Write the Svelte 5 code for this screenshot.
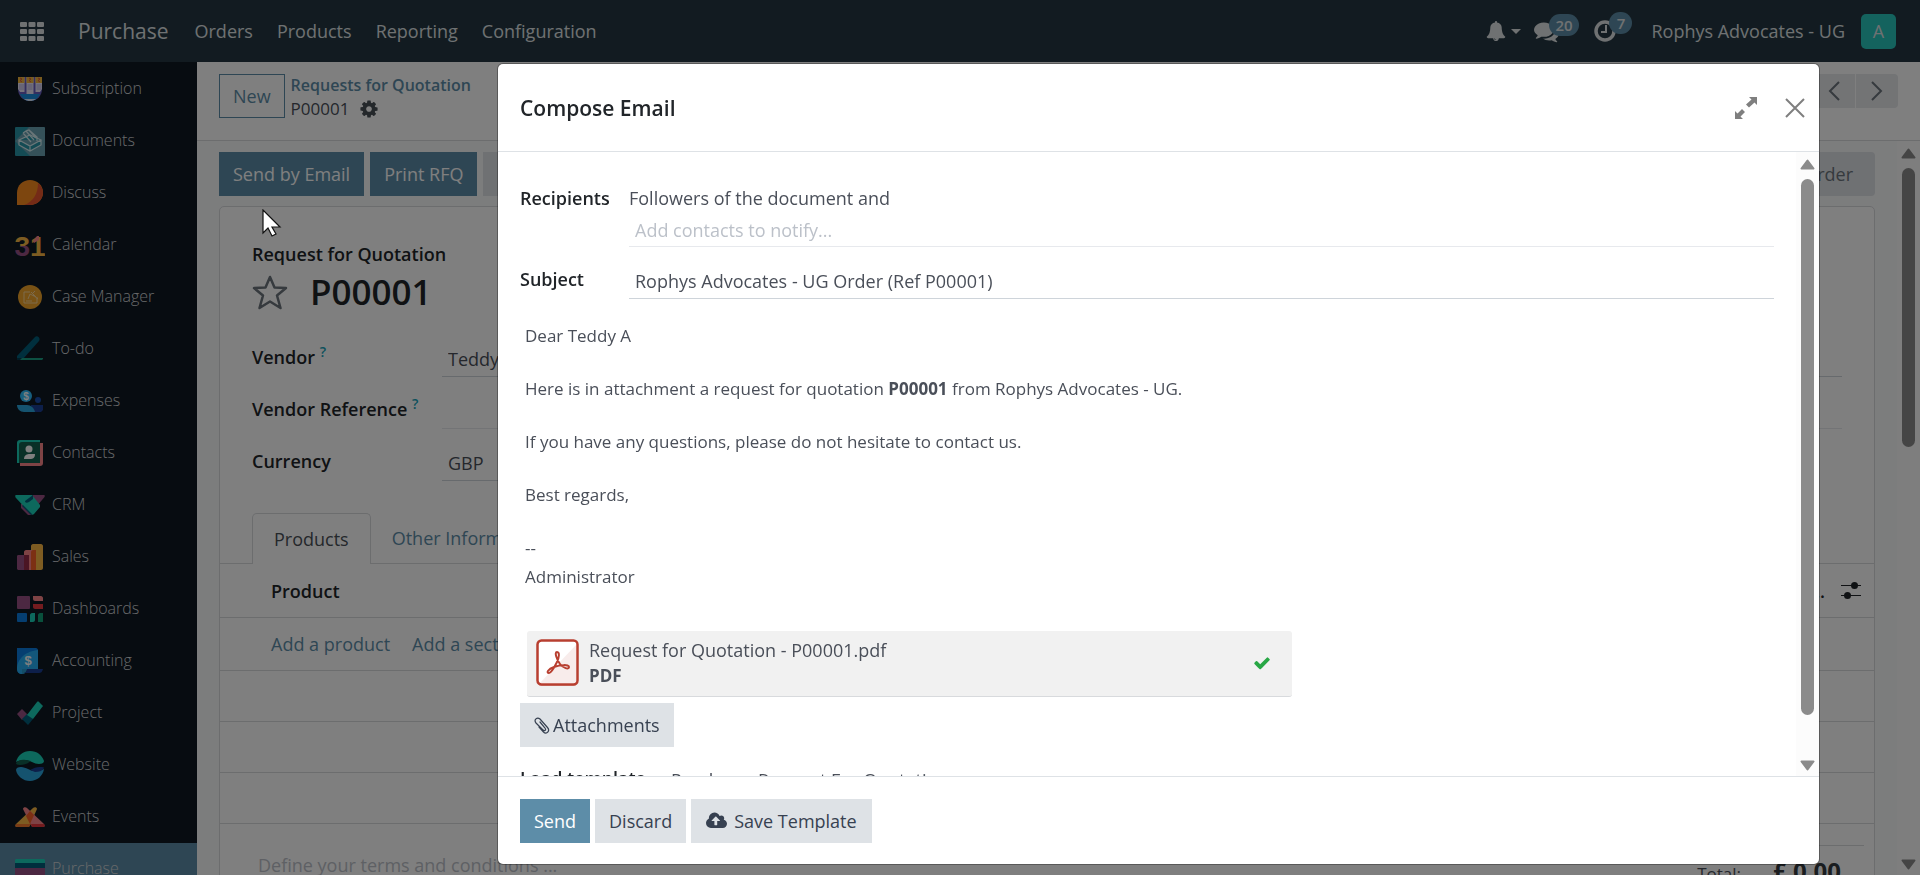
<script lang="ts">
	const menus = ['Orders', 'Products', 'Reporting', 'Configuration']

	const apps = [
		'Subscription',
		'Documents',
		'Discuss',
		'Calendar',
		'Case Manager',
		'To-do',
		'Expenses',
		'Contacts',
		'CRM',
		'Sales',
		'Dashboards',
		'Accounting',
		'Project',
		'Website',
		'Events',
		'Purchase'
	]

	let activeApp = $state('Purchase')
	let open = $state(true)
	let vendor = $state('Teddy A')
	let vendorRef = $state('')
	let currency = $state('GBP')
	let terms = $state('')
	let recipients = $state('')
	let subject = $state('Rophys Advocates - UG Order (Ref P00001)')
	let template = $state('Purchase: Request For Quotation')

	function close() {
		open = false
	}
</script>

{#snippet appIcon(name: string)}
	<svg class="app-icon" viewBox="0 0 30 30" aria-hidden="true">
		{#if name === 'Subscription'}
			<path d="M3 2h24v12c0 7-5 12-12 12S3 21 3 14z" fill="#6a5fc0" />
			<path d="M5 19h20c-2 4-5 7-10 7s-8-3-10-7z" fill="#1a8fe0" />
			<path d="M3 2h6.500v15H5L3 14zM11.500 2h7v17h-7zM20.500 2H27v12l-2 3h-4.500z" fill="#ece6f8" />
			<path d="M3 2h6.500v6H3zM11.500 2h7v6h-7zM20.500 2H27v6h-6.500z" fill="#f3b73c" />
			<path d="M5 3l2 1-2 1.500L7 7M14 3l2 1-2 1.500L16 7M23 3l2 1-2 1.500L25 7" stroke="#e0563b" fill="none" />
			<path d="M4 10h5M4 12h5M4 14h5M12.500 10h5M12.500 12h5M12.500 14h5M21.500 10h5M21.500 12h5M21.500 14h5" stroke="#a9a1dc" stroke-width=".8" />
			<path d="M9 24h12c-2 1.500-4 2-6 2s-4-.5-6-2z" fill="#d9e6fb" />
		{:else if name === 'Documents'}
			<rect width="30" height="29" rx="1" fill="#2896a8" />
			<path d="M15 29L30 14v15zM0 14L14 0h15l1 1v14L15 29z" fill="#7aa6b5" opacity=".8" />
			<path d="M4 13l11-5 11 5-11 6zM4 13v5l11 6 11-6v-5M15 19v5" fill="#2896a8" stroke="#d5edf1" stroke-width="1.200" />
			<path d="M8 6l8 9M8 6l3-2 8 9M11 4l3-1 7 8M14 3l8 7v4" fill="none" stroke="#d5edf1" stroke-width="1.200" />
		{:else if name === 'Discuss'}
			<path d="M2 26V14C2 6 8 1 15 1s13 5 13 12.500S22 26 15 26z" fill="#fb8d1e" />
			<path d="M23 4c3 2 5 6 5 9.500C28 21 22 26 15 26H9c9-3 14-11 14-22z" fill="#e8572e" />
		{:else if name === 'Calendar'}
			<linearGradient id="three" gradientUnits="userSpaceOnUse" x1="0" y1="5" x2="0" y2="24">
				<stop offset=".5" stop-color="#fbb945" />
				<stop offset=".55" stop-color="#985184" />
			</linearGradient>
			<text x="15" y="25" font-size="28" font-weight="700" text-anchor="middle" fill="#fbb945"><tspan fill="url(#three)">3</tspan>1</text>
			<path d="M18 10l4-5h2v4l-5 3z" fill="#fc868b" />
		{:else if name === 'Case Manager'}
			<circle cx="15" cy="14" r="12" fill="#f0a52b" />
			<path d="M9 9h6M9 9v11h13v-6M11 18h6M13 16l2-5 4 2M16 9l5 5M20 8l-3 3M18 12l5 4" fill="none" stroke="#f9d698" />
		{:else if name === 'To-do'}
			<path d="M2 24v-3L20 2c2-2 6 1 4 4L8 24z" fill="#005e7a" />
			<path d="M2 23h7l-2 2H2z" fill="#00384c" />
			<path d="M7 23h21v1l-1 1H5z" fill="#1ba085" />
		{:else if name === 'Expenses'}
			<circle cx="11" cy="9" r="6" fill="#2ebcfa" />
			<text x="11" y="13" font-size="10" font-weight="700" text-anchor="middle" fill="#fff">$</text>
			<circle cx="23" cy="13" r="3" fill="#1a4dab" />
			<path d="M16 18h12v5l-2 2H17z" fill="#1a3f95" />
			<path d="M2 18h10c4 0 7 3 8 7H9c-4 0-7-3-7-7z" fill="#2ba6de" />
		{:else if name === 'Contacts'}
			<path d="M8 4h20v20c0 2-1 3-3 3H5v-5z" fill="#fc868b" />
			<path d="M2 24V4c0-2 1-3 3-3h20v23z" fill="#1ad3bb" />
			<path d="M4 24V6c0-2 1-3 3-3h18v21z" fill="#12614e" />
			<circle cx="14" cy="10" r="3.500" fill="#fff" />
			<path d="M9 20c0-4 3-5 6-5h5c0 4-2 5-5 5z" fill="#fff" />
		{:else if name === 'CRM'}
			<path d="M17 4h12c1 0 1 1 .5 2L22 15z" fill="#985184" />
			<path d="M6 13v4l7 7h3l2-3-8-8z" fill="#985184" />
			<path d="M1 4h16l8 10v2l-6 7c-1 1-2 1-3 0L1 7c-1-1-1-3 0-3z" fill="#1ad3bb" />
			<path d="M18 4l-8 6c0 2 2 2 4 1l4-3zM8 14l9 9-1 1-9-9z" fill="#005e7a" />
		{:else if name === 'Sales'}
			<path d="M16 27V3c0-1 1-2 2-2h8c1 0 2 1 2 2v22c0 1-1 2-2 2z" fill="#fbb945" />
			<path d="M9 27V9c0-1 1-2 2-2h10v20z" fill="#fc868b" />
			<path d="M16 27V9c0-1 1-2 2-2h3v20z" fill="#f86126" />
			<path d="M2 26V13c0-1 1-1 2-1h10v15H3z" fill="#985184" />
			<path d="M9 12h5v15H9z" fill="#962b48" />
		{:else if name === 'Dashboards'}
			<rect x="2" y="1" width="13" height="13" rx="1" fill="#985184" />
			<path d="M18 1h8c1 0 2 1 2 2v3h-8c-1 0-2-1-2-2z" fill="#fc868b" />
			<path d="M18 9h10v5h-8c-1 0-2-1-2-2z" fill="#e8383f" />
			<rect x="2" y="18" width="10" height="9" rx="1" fill="#0a7de0" />
			<path d="M15 20c0-1 1-2 2-2h3v7c0 1-1 2-2 2h-3z" fill="#1ad3bb" />
			<path d="M23 20c0-1 1-2 2-2h3v9h-5z" fill="#12a078" />
		{:else if name === 'Accounting'}
			<path d="M2 1h19c1 0 2 1 2 2v19H7v5c-3 0-5-2-5-5z" fill="#0a7de0" />
			<path d="M23 3v19H12c0 3-2 5-5 5s-5-2-5-5C2 11 12 4 23 3z" fill="#2ebcfa" opacity=".8" />
			<path d="M12 22h16c-1 3-2 4-4 4H9c2-1 3-2 3-4z" fill="#1a3f95" />
			<text x="13" y="18" font-size="13" font-weight="700" text-anchor="middle" fill="#fff">$</text>
		{:else if name === 'Project'}
			<path d="M2 15l5-5 6 6-6 5z" fill="#985184" />
			<path d="M7 20l5-5 6 5-5 6z" fill="#005e7a" />
			<path d="M12 16L22 3c1-1 1-1 2 0l4 4L18 20z" fill="#1ad3bb" />
		{:else if name === 'Website'}
			<path d="M1 11C3 4 8 0 15 0s12 4 14 10c0 2-2 3-5 3-5 0-9-4-14-4-4 0-7 1-9 2z" fill="#1ad3bb" />
			<path d="M1 12c2-3 6-4 10-3l5 1c-4 3-7 4-11 4-3 0-4-1-4-2z" fill="#12614e" />
			<path d="M29 18c-1 7-7 12-14 12S2 25 1 19c0-2 2-3 5-3 5 0 9 4 14 4 4 0 7-1 9-2z" fill="#2ba6de" />
			<path d="M29 17c-2 3-5 4-9 4l-5-2c4-2 6-3 10-3 3 0 4 0 4 1z" fill="#1a3f95" />
		{:else if name === 'Events'}
			<path d="M18 5c1-1 4-1 4 1L14 24H2c-2 0-2-1-1-3z" fill="#fbb945" />
			<path d="M8 6c0-2 3-2 4-1l17 16c1 2 1 3-1 3H17z" fill="#fc868b" />
			<path d="M15 8l4 4-4 9-4-8z" fill="#f86126" />
			<path d="M1 21h15l-2 3H2c-2 0-2-2-1-3z" fill="#f57a2c" />
			<path d="M16 21h13c1 1 1 3-1 3H17z" fill="#e8383f" />
		{:else}
			<path d="M0 5l1-1h28l1 1v4H0z" fill="#1ad3bb" />
			<path d="M0 8h30v5H0z" fill="#005e7a" />
			<path d="M0 13h30v13H0z" fill="#985184" />
		{/if}
	</svg>
{/snippet}

{#snippet scrollbar(grow: number, rest: number)}
	<div class="scrollbar" aria-hidden="true">
		<svg width="15" height="11" viewBox="0 0 15 11"><path d="M7.500 1.500L13.500 9.500H1.500z" /></svg>
		<div class="thumb" style="flex-grow: {grow}"></div>
		<div style="flex-grow: {rest}"></div>
		<svg width="15" height="11" viewBox="0 0 15 11"><path d="M7.500 9.500L13.500 1.500H1.500z" /></svg>
	</div>
{/snippet}

<div class="shell">
	<header class="navbar">
		<button class="apps-toggle" aria-label="Apps">
			<svg width="24" height="19" viewBox="0 0 24 19" fill="currentColor">
				{#each [0, 7, 14] as y}
					{#each [0, 8.500, 17] as x}
						<rect {x} {y} width="7" height="5" rx="1" />
					{/each}
				{/each}
			</svg>
		</button>
		<a class="brand" href="#purchase">Purchase</a>
		<nav class="menus">
			{#each menus as menu}
				<a href="#{menu}">{menu}</a>
			{/each}
		</nav>
		<div class="systray">
			<button class="tray bell" aria-label="Notifications">
				<svg width="20" height="20" viewBox="0 0 1792 1792" fill="currentColor"><path d="M912 1696q0-16-16-16-59 0-101.500-42.500t-42.500-101.500q0-16-16-16t-16 16q0 73 51.500 124.500t124.500 51.500q16 0 16-16zm816-288q0 52-38 90t-90 38h-448q0 106-75 181t-181 75-181-75-75-181h-448q-52 0-90-38t-38-90q50-42 91-88t85-119.500 74.500-158.500 50-206 19.500-260q0-152 117-282.500t307-158.500q-8-19-8-39 0-40 28-68t68-28 68 28 28 68q0 20-8 39 190 28 307 158.500t117 282.500q0 139 19.500 260t50 206 74.500 158.500 85 119.500 91 88z" /></svg>
				<svg width="10" height="5" viewBox="0 0 10 5" fill="currentColor"><path d="M0 0h10L5 5z" /></svg>
			</button>
			<button class="tray" aria-label="Messages">
				<svg width="25" height="25" viewBox="0 0 1792 1792" fill="currentColor"><path d="M1408 768q0 139-94 257t-256.500 186.500-353.500 68.500q-86 0-176-16-124 88-278 128-36 9-86 16h-3q-11 0-20.500-8t-11.500-21q-1-3-1-6.500t.5-6.500 2-6l2.500-5t3.500-5.500 4-5 4.500-5 4-4.500q5-6 23-25t26-29.500 22.500-29 25-38.500 20.500-44q-124-72-195-177t-71-224q0-139 94-257t256.500-186.500 353.500-68.500 353.500 68.500 256.500 186.500 94 257zm384 256q0 120-71 224.500t-195 176.500q10 24 20.500 44t25 38.500 22.500 29 26 29.500 23 25q1 1 4 4.500t4.500 5 4 5 3.500 5.500l2.500 5t2 6 .5 6.500-1 6.500q-3 14-13 22t-22 7q-50-7-86-16-154-40-278-128-90 16-176 16-271 0-472-132 58 4 88 4 161 0 309-45t264-129q125-92 192-212t67-254q0-77-23-152 129 71 204 178t75 230z" /></svg>
				<span class="badge">20</span>
			</button>
			<button class="tray" aria-label="Activities">
				<svg width="22" height="22" viewBox="0 0 22 22" fill="none" stroke="currentColor"><circle cx="11" cy="11" r="9" stroke-width="3.500" /><path d="M12 5v7H7" stroke-width="2" /></svg>
				<span class="badge">7</span>
			</button>
			<a class="company" href="#company">Rophys Advocates - UG</a>
			<button class="avatar" aria-label="User menu">A</button>
		</div>
	</header>

	<div class="page">
		<nav class="sidebar">
			{#each apps as app}
				<a class="app" class:active={activeApp === app} href="#{app}" onclick={() => (activeApp = app)}>
					{@render appIcon(app)}
					<span>{app}</span>
				</a>
			{/each}
		</nav>

		<main class="main">
			<div class="control-panel">
				<button class="btn outline">New</button>
				<div class="breadcrumb">
					<a href="#rfq">Requests for Quotation</a>
					<span class="current">
						P00001
						<button class="plain" aria-label="Actions">
							<svg width="20" height="20" viewBox="0 0 1792 1792" fill="currentColor"><path d="M1152 896q0-106-75-181t-181-75-181 75-75 181 75 181 181 75 181-75 75-181zm512-109v222q0 12-8 23t-20 13l-185 28q-19 54-39 91 35 50 107 138 10 12 10 25t-9 23q-27 37-99 108t-94 71q-12 0-26-9l-138-108q-44 23-91 38-16 136-29 186-7 28-36 28h-222q-14 0-24.500-8.500t-11.500-21.500l-28-184q-49-16-90-37l-141 107q-10 9-25 9-14 0-25-11-126-114-165-168-7-10-7-23 0-12 8-23 15-21 51-66.500t54-70.500q-27-50-41-99l-183-27q-13-2-21-12.500t-8-23.500v-222q0-12 8-23t19-13l186-28q14-46 39-92-40-57-107-138-10-12-10-24 0-10 9-23 26-36 98.500-107.500t94.500-71.500q13 0 26 10l138 107q44-23 91-38 16-136 29-186 7-28 36-28h222q14 0 24.500 8.500t11.500 21.500l28 184q49 16 90 37l142-107q9-9 24-9 13 0 25 10 129 119 165 170 7 8 7 22 0 12-8 23-15 21-51 66.500t-54 70.500q26 50 41 98l183 28q13 2 21 12.500t8 23.500z" /></svg>
						</button>
					</span>
				</div>
				<div class="pager">
					<button aria-label="Previous">
						<svg width="12" height="20" viewBox="0 0 12 20"><path d="M11 1L2 10l9 9" /></svg>
					</button>
					<button aria-label="Next">
						<svg width="12" height="20" viewBox="0 0 12 20"><path d="M1 1l9 9-9 9" /></svg>
					</button>
				</div>
			</div>

			<div class="scroll-row">
				<div class="content">
					<div class="statusbar">
						<button class="btn primary">Send by Email</button>
						<button class="btn primary">Print RFQ</button>
						<button class="btn secondary confirm">Confirm Order</button>
						<button class="btn secondary status">Purchase Order</button>
					</div>

					<section class="sheet">
						<div class="title-block">
							<span class="label">Request for Quotation</span>
							<div class="title-row">
								<button class="plain star" aria-label="Priority">
									<svg width="36" height="36" viewBox="0 0 36 36" fill="none" stroke="currentColor" stroke-width="2.500" stroke-linejoin="round"><path d="M18 3l4.500 10.500L34 14l-9 7.500L28.500 34 18 27.500 7.500 34 11 21.500 2 14l11.500-.5z" /></svg>
								</button>
								<h1>P00001</h1>
							</div>
						</div>

						<div class="groups">
							<div class="group">
								<label for="vendor">Vendor <sup>?</sup></label>
								<input id="vendor" bind:value={vendor} />
								<label for="vendor-ref">Vendor Reference <sup>?</sup></label>
								<input id="vendor-ref" class="faint" bind:value={vendorRef} />
								<label for="currency">Currency</label>
								<input id="currency" bind:value={currency} />
							</div>
							<div class="group">
								<label for="deadline">Order Deadline</label>
								<input id="deadline" />
								<label for="arrival">Expected Arrival</label>
								<input id="arrival" class="faint" />
							</div>
						</div>

						<div class="tabs">
							<button class="tab active">Products</button>
							<button class="tab">Other Information</button>
						</div>

						<table class="lines">
							<thead>
								<tr>
									<th>Product</th>
									<th>
										<div class="optional">
											<span>Am...</span>
											<svg width="20" height="18" viewBox="0 0 20 18" fill="currentColor"><path d="M0 3h20v1H0zM0 13h20v1H0z" /><circle cx="13.500" cy="3.500" r="3.500" /><circle cx="6.500" cy="13.500" r="3.500" /></svg>
										</div>
									</th>
								</tr>
							</thead>
							<tbody>
								<tr>
									<td colspan="2">
										<div class="adders">
											<a href="#add-product">Add a product</a>
											<a href="#add-section">Add a section</a>
										</div>
									</td>
								</tr>
								{#each [1, 2, 3] as n (n)}
									<tr><td colspan="2"></td></tr>
								{/each}
							</tbody>
						</table>

						<div class="bottom">
							<textarea aria-label="Terms" rows="2" placeholder="Define your terms and conditions ..." bind:value={terms}></textarea>
							<div class="total"><span>Total:</span><strong>£ 0.00</strong></div>
						</div>
					</section>
				</div>
				{@render scrollbar(279, 394)}
			</div>
		</main>
	</div>
</div>

{#if open}
	<div class="backdrop">
		<div class="modal" role="dialog" aria-label="Compose Email">
			<header class="modal-header">
				<h2>Compose Email</h2>
				<button class="plain" aria-label="Expand">
					<svg width="24" height="24" viewBox="0 0 24 24" fill="currentColor"><path d="M15 1h8v8l-2.500-2.500-5.500 5-3-3 5.500-5zM9 23H1v-8l2.500 2.500L8 13l3 3-4.500 4.500z" /></svg>
				</button>
				<button class="plain" aria-label="Close" onclick={close}>
					<svg width="20" height="20" viewBox="0 0 20 20" fill="none" stroke="currentColor" stroke-width="2"><path d="M1 1l18 18M19 1L1 19" /></svg>
				</button>
			</header>

			<div class="modal-scroll">
				<div class="modal-body">
					<div class="row recipients">
						<label for="recipients">Recipients</label>
						<div class="cell">
							<span>Followers of the document and</span>
							<input id="recipients" class="faint tight" placeholder="Add contacts to notify..." bind:value={recipients} />
						</div>
					</div>
					<div class="row">
						<label for="subject">Subject</label>
						<input id="subject" bind:value={subject} />
					</div>

					<div class="editor">
						<p>Dear Teddy A</p>
						<p>Here is in attachment a request for quotation <b>P00001</b> from Rophys Advocates - UG.</p>
						<p>If you have any questions, please do not hesitate to contact us.</p>
						<p>Best regards,</p>
						<div class="signature">
							<span>--</span>
							<span>Administrator</span>
						</div>
					</div>

					<div class="attachment">
						<svg width="43" height="48" viewBox="0 0 43 48">
							<rect x="1" y="2" width="41" height="45" rx="5" fill="#e3b9b4" />
							<rect x="1.500" y="1.500" width="40" height="44" rx="4" fill="#fff" />
							<path d="M40 6v38H4z" fill="#f8eceb" />
							<rect x="1.500" y="1.500" width="40" height="44" rx="4" fill="none" stroke="#b83f30" stroke-width="2.500" />
							<path d="M21 13c3 0 2 6 0 10s-6 11-8 11c-3 0-1-4 5-6s15-3 15 0c0 3-6 1-9-3s-6-12-3-12z" fill="none" stroke="#b83f30" stroke-width="2" />
						</svg>
						<div class="file">
							<a href="#pdf">Request for Quotation - P00001.pdf</a>
							<b>PDF</b>
						</div>
						<svg class="check" width="18" height="18" viewBox="0 0 1792 1792" fill="currentColor"><path d="M1671 566q0 40-28 68l-724 724-136 136q-28 28-68 28t-68-28l-136-136-362-362q-28-28-28-68t28-68l136-136q28-28 68-28t68 28l294 295 656-657q28-28 68-28t68 28l136 136q28 28 28 68z" /></svg>
					</div>

					<button class="btn secondary attach">
						<svg width="16" height="17" viewBox="0 0 16 17" fill="none" stroke="currentColor" stroke-width="1.200" stroke-linecap="round"><path d="M6 5l5 6c1.500 2-.5 3.500-2 2L2 6C-.5 3 3-.5 6 2l7.500 8.500c3 3.500-1 7.500-4 4.500L5 10" /></svg>
						Attachments
					</button>

					<div class="row template">
						<label for="template">Load template</label>
						<input id="template" bind:value={template} />
					</div>
				</div>
				{@render scrollbar(536, 27)}
			</div>

			<footer class="modal-footer">
				<button class="btn primary">Send</button>
				<button class="btn secondary" onclick={close}>Discard</button>
				<button class="btn secondary save">
					<svg width="21" height="20" viewBox="-64 0 1920 1792" fill="currentColor"><path d="M1216 864q0-14-9-23l-352-352q-9-9-23-9t-23 9l-351 351q-10 12-10 24 0 14 9 23t23 9h224v352q0 13 9.500 22.500t22.500 9.500h192q13 0 22.500-9.500t9.500-22.500v-352h224q13 0 22.500-9.500t9.500-22.500zm640 288q0 159-112.500 271.500t-271.500 112.500h-1088q-185 0-316.500-131.500t-131.500-316.500q0-130 70-240t188-165q-2-30-2-43 0-212 150-362t362-150q156 0 285.500 87t188.500 231q71-62 166-62 106 0 181 75t75 181q0 76-41 138 130 31 213.500 135.500t83.500 238.500z" /></svg>
					Save Template
				</button>
			</footer>
		</div>
	</div>
{/if}

<svg class="cursor" width="20" height="28" viewBox="0 0 20 28" aria-hidden="true"><path d="M1 1v23l5-5 4 8 4-2-4-7h8z" fill="#fff" stroke="#111" stroke-width="1.200" /></svg>

<style>
	:global(body) {
		overflow: hidden;
		font-family: 'Open Sans', 'Noto Sans', sans-serif;
		font-size: 18px;
		line-height: 26px;
		color: #4a4f59;
	}

	.shell {
		height: 100vh;
		display: flex;
		flex-direction: column;
	}

	button,
	input,
	textarea {
		font: inherit;
		color: inherit;
		margin: 0;
		border: 0;
		border-radius: 0;
		box-sizing: border-box;
		background: none;
	}

	a {
		color: inherit;
		text-decoration: none;
	}

	svg {
		display: block;
		flex: none;
	}

	.navbar {
		height: 62px;
		flex: none;
		display: flex;
		align-items: center;
		padding: 0 24px 0 20px;
		box-sizing: border-box;
		background: #243742;
		color: #dfe2e4;
	}

	.apps-toggle {
		padding: 0;
		margin-right: 34px;
	}

	.brand {
		font-size: 21px;
		margin-right: 26px;
	}

	.menus {
		display: flex;
		gap: 24px;
	}

	.systray {
		margin-left: auto;
		display: flex;
		align-items: center;
	}

	.tray {
		position: relative;
		padding: 0;
		margin-right: 35px;
	}

	.bell {
		display: flex;
		align-items: center;
		gap: 5px;
		margin-right: 13px;
	}

	.badge {
		position: absolute;
		left: 15px;
		bottom: 8px;
		min-width: 11px;
		padding: 0 6px;
		border-radius: 11px;
		background: #5d8da8;
		font-size: 15px;
		font-weight: 600;
		line-height: 22px;
	}

	.avatar {
		width: 35px;
		height: 35px;
		margin-left: 16px;
		padding: 0;
		border-radius: 5px;
		background: #28c6bd;
	}

	.page {
		flex: 1;
		min-height: 0;
		display: flex;
	}

	.sidebar {
		width: 197px;
		flex: none;
		overflow: hidden;
		padding-top: 1px;
		box-sizing: border-box;
		background: #0e1822;
		color: #cfd2d5;
		font-size: 16px;
		font-weight: 300;
	}

	.app {
		display: flex;
		gap: 7px;
		height: 52px;
		padding: 12px 15px;
		box-sizing: border-box;
	}

	.app.active {
		background: #5d8da8;
	}

	.app-icon {
		width: 30px;
		height: 30px;
		font-family: 'Liberation Sans', sans-serif;
	}

	.main {
		flex: 1;
		min-width: 0;
		display: flex;
		flex-direction: column;
		background: #fff;
	}

	.control-panel {
		display: flex;
		align-items: flex-start;
		gap: 6px;
		height: 79px;
		flex: none;
		padding: 12px 22px;
		box-sizing: border-box;
		border-bottom: 1px solid #d8dadd;
	}

	.btn {
		height: 44px;
		padding: 0 14px;
		white-space: nowrap;
	}

	.primary {
		background: #5d8da8;
		color: #fff;
	}

	.secondary {
		background: #dee2e6;
		color: #374151;
	}

	.outline {
		padding: 0 13px;
		border: 1px solid #5d8da8;
		color: #5d8da8;
	}

	.breadcrumb {
		display: flex;
		flex-direction: column;
		font-size: 17px;
		line-height: 23px;
	}

	.breadcrumb a {
		color: #5d8da8;
		font-size: 16px;
		font-weight: 600;
	}

	.current {
		display: flex;
		align-items: center;
		gap: 10px;
	}

	.plain {
		padding: 0;
		color: #495057;
	}

	.pager {
		display: flex;
		gap: 1px;
		margin-left: auto;
	}

	.pager button {
		width: 42px;
		height: 34px;
		display: grid;
		place-items: center;
		padding: 0;
		background: #e6e8eb;
	}

	.pager button:last-child {
		border-radius: 0 4px 4px 0;
	}

	.pager path {
		fill: none;
		stroke: #6c757d;
		stroke-width: 2;
	}

	.scroll-row {
		flex: 1;
		min-height: 0;
		display: flex;
		background: #f9fafb;
	}

	.content {
		flex: 1;
		min-width: 0;
		overflow: hidden;
		padding: 11px 22px;
	}

	.statusbar {
		display: flex;
		gap: 6px;
		margin-bottom: 10px;
	}

	.confirm {
		padding: 0 20px;
	}

	.status {
		margin-left: auto;
		padding: 0 22px;
		border-radius: 4px;
		color: #6c757d;
	}

	.scrollbar {
		width: 23px;
		flex: none;
		display: flex;
		flex-direction: column;
		align-items: center;
		gap: 9px;
		padding: 7px 0 5px;
		box-sizing: border-box;
		background: #fcfcfc;
		color: #8b8b8b;
	}

	.scrollbar path {
		fill: currentColor;
		stroke: currentColor;
		stroke-width: 2;
		stroke-linejoin: round;
	}

	.thumb {
		width: 13px;
		border-radius: 7px;
		background: currentColor;
	}

	.sheet {
		border: 1px solid #d8dadd;
		border-radius: 5px;
		background: #fff;
	}

	.title-block {
		padding: 34px 32px 0;
	}

	.label,
	label,
	th {
		color: #212529;
		font-weight: 600;
	}

	.title-row {
		display: flex;
		align-items: center;
		gap: 22px;
		height: 50px;
	}

	.star {
		color: #6c757d;
	}

	h1 {
		margin: 0;
		font-size: 35px;
		font-weight: 600;
		color: #212529;
	}

	.groups {
		display: grid;
		grid-template-columns: 1fr 1fr;
		gap: 32px;
		padding: 20px 32px;
	}

	.group {
		display: grid;
		grid-template-columns: 190px 1fr;
		grid-auto-rows: 52px;
	}

	label {
		padding-top: 7px;
		white-space: nowrap;
	}

	sup {
		color: #17a2b8;
		font-size: 14px;
		line-height: 0;
	}

	input {
		width: 100%;
		height: 40px;
		padding: 9px 6px 4px;
		border-bottom: 1px solid #ced4da;
		outline: none;
	}

	input.faint {
		border-bottom-color: #e7e9ed;
	}

	input::placeholder,
	textarea::placeholder {
		color: #bcc1c9;
		opacity: 1;
	}

	.tabs {
		display: flex;
		padding: 0 32px;
		border-bottom: 1px solid #d8dadd;
	}

	.tab {
		height: 50px;
		padding: 0 21px;
		color: #5d8da8;
	}

	.tab.active {
		height: 51px;
		margin-bottom: -1px;
		border: 1px solid #d8dadd;
		border-bottom: 0;
		border-radius: 5px 5px 0 0;
		background: #fff;
		color: #495057;
	}

	.lines {
		width: 100%;
		border-collapse: collapse;
	}

	th,
	td {
		height: 50px;
		padding: 0 13px 0 51px;
		border-bottom: 1px solid #d8dadd;
		text-align: left;
	}

	th {
		height: 53px;
	}

	.optional {
		display: flex;
		align-items: center;
		justify-content: flex-end;
		gap: 16px;
	}

	.adders {
		display: flex;
		align-items: center;
		gap: 22px;
		height: 52px;
		color: #5d8da8;
	}

	.bottom {
		display: flex;
		justify-content: space-between;
		align-items: flex-start;
		padding: 21px 10px 0 38px;
	}

	textarea {
		width: 50%;
		padding: 7px 0;
		resize: none;
	}

	.total {
		width: 300px;
		display: flex;
		justify-content: flex-end;
		align-items: baseline;
		gap: 32px;
		padding: 12px 23px 0 0;
		border-top: 1px solid #d8dadd;
	}

	.total span {
		font-size: 17px;
	}

	.total strong {
		font-size: 24px;
		color: #343a40;
	}

	.backdrop {
		position: fixed;
		inset: 0;
		display: flex;
		padding: 64px 101px 11px 498px;
		background: rgba(0, 0, 0, 0.5);
	}

	.modal {
		flex: 1;
		min-width: 0;
		display: flex;
		flex-direction: column;
		border-radius: 5px;
		background: #fff;
		box-shadow: 0 0 0 1px rgba(0, 0, 0, 0.3);
		overflow: hidden;
	}

	.modal-header {
		display: flex;
		align-items: center;
		gap: 27px;
		height: 88px;
		flex: none;
		padding: 0 14px 0 22px;
		box-sizing: border-box;
		border-bottom: 1px solid #dee2e6;
	}

	.modal-header .plain {
		color: #7f7f7f;
	}

	h2 {
		flex: 1;
		margin: 0;
		font-size: 21px;
		font-weight: 600;
		color: #212529;
	}

	.modal-scroll {
		flex: 1;
		min-height: 0;
		display: flex;
	}

	.modal-body {
		flex: 1;
		min-width: 0;
		overflow: hidden;
		padding: 33px 22px 0;
	}

	.row {
		display: grid;
		grid-template-columns: 109px 1fr;
	}

	.recipients {
		margin-bottom: 12px;
	}

	.recipients label {
		padding-top: 0;
	}

	.cell {
		display: flex;
		flex-direction: column;
	}

	input.tight {
		height: 36px;
		padding: 6px 6px 3px;
	}

	.editor {
		padding: 24px 5px 41px;
		font-size: 17px;
	}

	p {
		margin: 0 0 27px;
	}

	.signature {
		display: flex;
		flex-direction: column;
		gap: 3px;
	}

	.attachment {
		display: flex;
		align-items: center;
		gap: 10px;
		width: 61%;
		height: 66px;
		margin: 0 0 6px 7px;
		padding: 0 21px 2px 9px;
		box-sizing: border-box;
		border-bottom: 1px solid #d8dadd;
		border-radius: 3px;
		background: #f1f1f1;
	}

	.file {
		flex: 1;
		display: flex;
		flex-direction: column;
	}

	.file b {
		font-size: 17px;
	}

	.check {
		color: #28a745;
	}

	.attach,
	.save {
		display: flex;
		align-items: center;
		gap: 3px;
	}

	.save {
		gap: 7px;
		padding: 0 15px;
	}

	.template {
		grid-template-columns: 145px 1fr;
		margin-top: 11px;
	}

	.modal-footer {
		display: flex;
		gap: 5px;
		flex: none;
		padding: 22px 22px 21px;
		border-top: 1px solid #dee2e6;
	}

	.cursor {
		position: fixed;
		left: 262px;
		top: 209px;
	}
</style>
